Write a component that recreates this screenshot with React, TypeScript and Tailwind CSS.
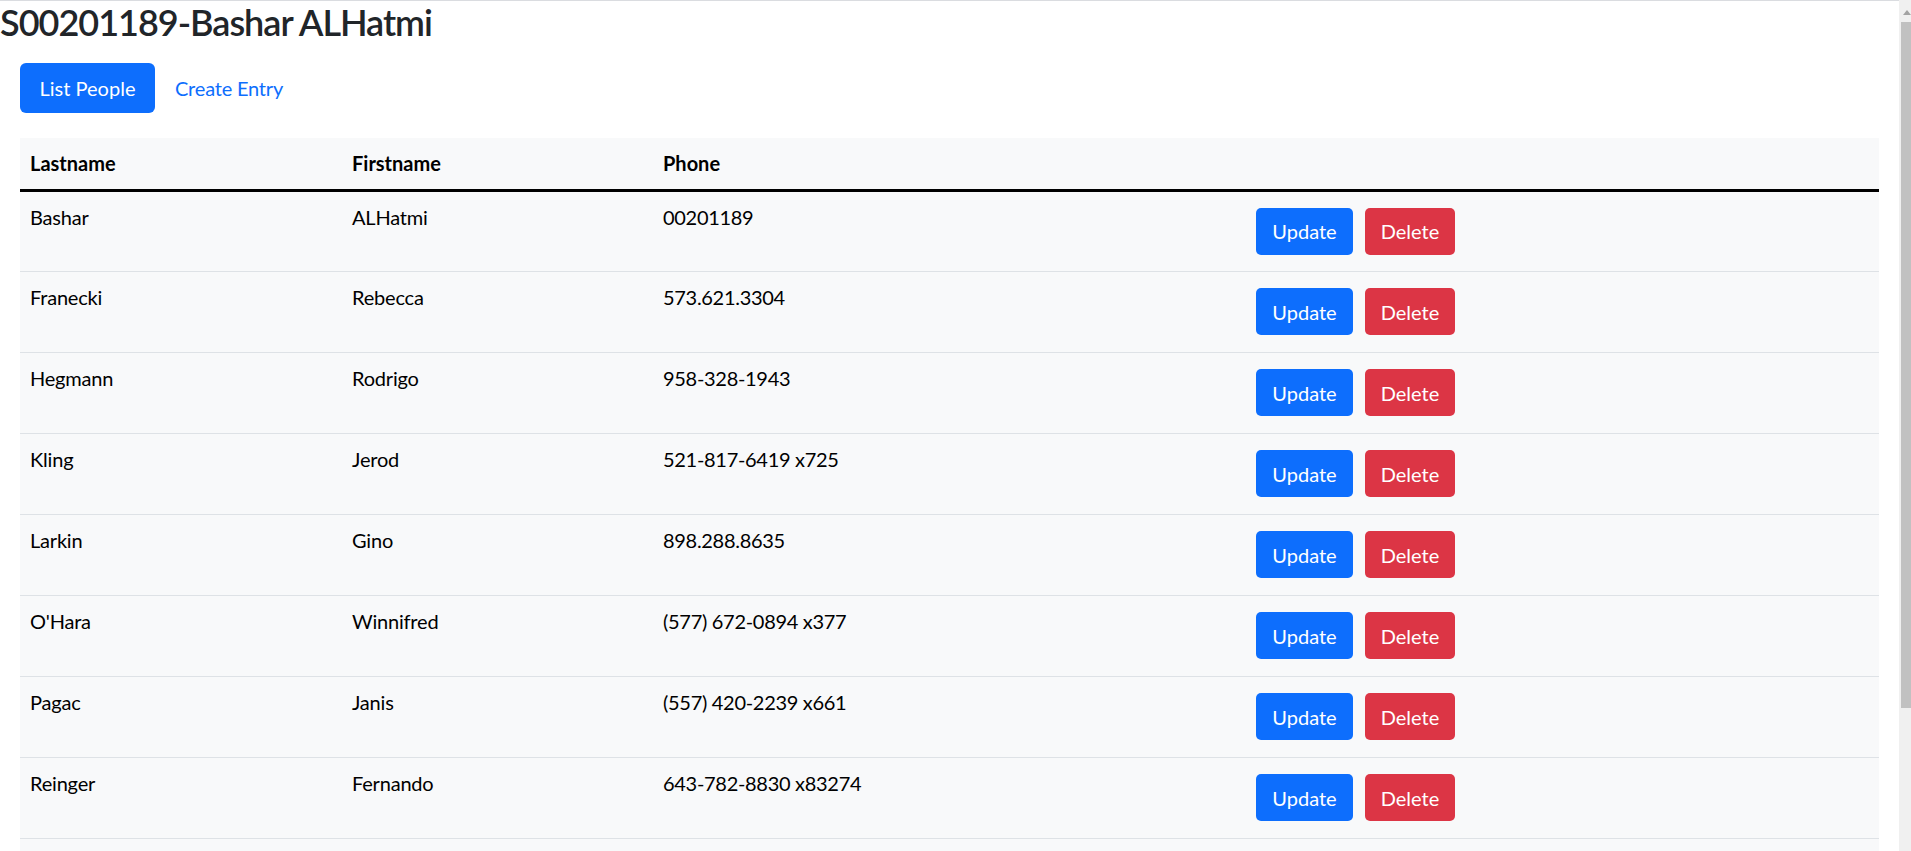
import React from "react";

const rows = [
  ["Bashar", "ALHatmi", "00201189"],
  ["Franecki", "Rebecca", "573.621.3304"],
  ["Hegmann", "Rodrigo", "958-328-1943"],
  ["Kling", "Jerod", "521-817-6419 x725"],
  ["Larkin", "Gino", "898.288.8635"],
  ["O'Hara", "Winnifred", "(577) 672-0894 x377"],
  ["Pagac", "Janis", "(557) 420-2239 x661"],
  ["Reinger", "Fernando", "643-782-8830 x83274"],
];

export default function App() {
  return (
    <div className="flex h-[851px] w-[1911px] overflow-hidden bg-white font-['Lato',sans-serif] text-[20px] text-black">
      <div className="flex-1 border-t border-[#dadce0]">
        <h2 className="m-0 text-[36px] font-semibold leading-[42px] tracking-[-1px] text-[#212529]">
          S00201189-Bashar ALHatmi
        </h2>
        <div className="px-5">
          <div className="mt-[20px] flex items-center">
            <div className="flex h-[50px] w-[135px] items-center justify-center rounded-[6px] bg-[#0d6efd] leading-[30px] text-white">
              List People
            </div>
            <div className="px-5 leading-[30px] tracking-[-0.2px] text-[#0d6efd]">Create Entry</div>
          </div>
          <table className="mt-[25px] w-full table-fixed border-collapse bg-[#f8f9fa]">
            <colgroup>
              <col className="w-[322px]" />
              <col className="w-[311px]" />
              <col className="w-[593px]" />
              <col />
            </colgroup>
            <thead>
              <tr className="h-[52px] border-b-[3px] border-black">
                <th className="px-[10px] text-left font-bold leading-[30px]">Lastname</th>
                <th className="px-[10px] text-left font-bold leading-[30px]">Firstname</th>
                <th className="px-[10px] text-left font-bold leading-[30px]">Phone</th>
                <th></th>
              </tr>
            </thead>
            <tbody>
              {rows.map((r, i) => (
                <tr key={i} className="h-[81px] border-b border-[#dee2e6]">
                  <td className="px-[10px] pt-[10px] align-top leading-[30px] tracking-[-0.2px]">{r[0]}</td>
                  <td className="px-[10px] pt-[10px] align-top leading-[30px] tracking-[-0.2px]">{r[1]}</td>
                  <td className="px-[10px] pt-[10px] align-top leading-[30px] tracking-[-0.3px]">{r[2]}</td>
                  <td className="px-[10px] align-middle">
                    <div className="flex gap-3">
                      <button className="flex h-[47px] w-[97px] items-center justify-center rounded-[5px] bg-[#0d6efd] text-white">
                        Update
                      </button>
                      <button className="flex h-[47px] w-[90px] items-center justify-center rounded-[5px] bg-[#dc3545] text-white">
                        Delete
                      </button>
                    </div>
                  </td>
                </tr>
              ))}
              <tr className="h-[81px] border-b border-[#dee2e6]">
                <td></td>
                <td></td>
                <td></td>
                <td></td>
              </tr>
            </tbody>
          </table>
        </div>
      </div>
      <div className="flex w-3 flex-col bg-[#f0f0f0]">
        <div className="flex h-[22px] items-center justify-end">
          <svg width="8" height="6" viewBox="0 0 8 6" className="mt-1">
            <polygon points="4,0 8,5 0,5" fill="#a3a3a3" />
          </svg>
        </div>
        <div className="ml-[2px] h-[686px] bg-[#c1c1c1]"></div>
      </div>
    </div>
  );
}
